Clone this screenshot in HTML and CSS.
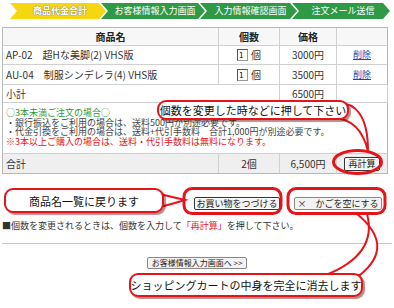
FILE: index.html
```html
<!DOCTYPE html>
<html lang="ja">
<head>
  <meta charset="UTF-8">
  <title>ショッピングカート</title>
  <link rel="stylesheet" href="styles.css">
</head>
<body>
<div class="page">

  <div class="steps">
    <div class="step step-now">商品代金合計</div>
    <div class="step">お客様情報入力画面</div>
    <div class="step">入力情報確認画面</div>
    <div class="step">注文メール送信</div>
  </div>

  <div class="cart">
    <div class="cell th">商品名</div>
    <div class="cell th">個数</div>
    <div class="cell th">価格</div>
    <div class="cell th"></div>

    <div class="cell name">AP-02　超Hな美脚(2) VHS版</div>
    <div class="cell mid"><input class="qty-box" type="text" value="1"> 個</div>
    <div class="cell mid">3000円</div>
    <div class="cell mid"><a class="del" href="#">削除</a></div>

    <div class="cell name">AU-04　制服シンデレラ(4) VHS版</div>
    <div class="cell mid"><input class="qty-box" type="text" value="1"> 個</div>
    <div class="cell mid">3500円</div>
    <div class="cell mid"><a class="del" href="#">削除</a></div>

    <div class="cell name span2">小計</div>
    <div class="cell mid">6500円</div>
    <div class="cell"></div>

    <div class="cell notes span4">
      <div class="green">○3本未満ご注文の場合○</div>
      <div>・銀行振込をご利用の場合は、送料500円が別途必要です。</div>
      <div>・代金引換をご利用の場合は、送料+代引手数料　合計1,000円が別途必要です。</div>
      <div class="red">※3本以上ご購入の場合は、送料・代引手数料は無料になります。</div>
    </div>

    <div class="cell name total">合計</div>
    <div class="cell mid total">2個</div>
    <div class="cell mid total">6,500円</div>
    <div class="cell mid total"><button class="btn btn-focus">再計算</button></div>
  </div>

  <div class="actions">
    <button class="btn btn-focus btn-shop">お買い物をつづける</button>
    <button class="btn btn-clear">×　かごを空にする</button>
  </div>

  <p class="hint">■個数を変更されるときは、個数を入力して<span class="red">「再計算」</span>を押して下さい。</p>

  <hr class="rule">

  <div class="next">
    <button class="btn btn-small">お客様情報入力画面へ &gt;&gt;</button>
  </div>

  <!-- annotation layer -->
  <svg class="marks" width="394" height="308" viewBox="0 0 394 308">
    <g fill="none" stroke="#e5141b" stroke-width="3">
      <ellipse cx="357.5" cy="162" rx="24" ry="11.5"/>
      <rect x="184" y="188.5" width="97" height="25" rx="8"/>
      <rect x="288" y="188.5" width="97" height="25" rx="8"/>
    </g>
    <g fill="#fff" stroke="#e5141b" stroke-width="2">
      <path d="M334 103 Q368 100 368 151 Q360 119 334 118 Z"/>
      <path d="M160 194 Q172 197 185 200 Q172 204 160 207 Z"/>
      <path d="M357 214 Q396 246 360 275 L326 275 Q378 254 367 214 Z"/>
    </g>
  </svg>

  <div class="callout callout-recalc">個数を変更した時などに押して下さい</div>
  <div class="callout callout-back">商品名一覧に戻ります</div>
  <div class="callout callout-clear">ショッピングカートの中身を完全に消去します</div>

</div>
</body>
</html>
```

FILE: styles.css
```css
body {
  margin: 0;
  background: #fff;
  color: #333;
  font-family: "Noto Sans CJK JP", "Noto Sans", sans-serif;
}
.page {
  position: relative;
  width: 394px;
  height: 308px;
  padding: 3px 2px 0;
  box-sizing: border-box;
  overflow: hidden;
}

/* step bar */
.steps {
  display: flex;
  height: 16px;
  margin: 0 0 8px 8px;
}
.step {
  height: 16px;
  line-height: 16px;
  font-size: 9px;
  color: #fff;
  background: #2f9a45;
  text-align: center;
  padding-left: 4px;
  clip-path: polygon(0 0, calc(100% - 7px) 0, 100% 50%, calc(100% - 7px) 100%, 0 100%, 7px 50%);
  margin-left: -5px;
}
.step:nth-child(1) { width: 92px; margin-left: 0; }
.step:nth-child(2) { width: 100px; }
.step:nth-child(3) { width: 93px; }
.step:nth-child(4) { width: 94px; }
.step-now {
  background: #f6d611;
  color: #fff;
  font-weight: bold;
  text-shadow: 0 0 1px #777, 0 0 1px #777;
}

/* cart table */
.cart {
  display: grid;
  grid-template-columns: 216px 61px 57px 51px;
  grid-template-rows: 18px 19px 20px 18px 51px 20px;
  width: 386px;
  box-sizing: border-box;
  border-top: 1px solid #b8b8b8;
  border-left: 1px solid #b8b8b8;
  font-size: 10px;
  line-height: 14px;
  color: #333;
}
.cell {
  display: flex;
  align-items: center;
  padding: 0 3px;
  border-right: 1px solid #d0d0d0;
  border-bottom: 1px solid #d0d0d0;
  white-space: nowrap;
}
.cell:nth-child(4n) { border-right-color: #b8b8b8; }
.th {
  justify-content: center;
  font-weight: bold;
  background: #f7f7f7;
  color: #222;
}
.mid { justify-content: center; gap: 3px; }
.span2 { grid-column: span 2; }
.span4 {
  grid-column: span 4;
  border-right-color: #b8b8b8;
}
.qty-box {
  width: 7px;
  height: 10px;
  padding: 0 1px;
  font-size: 8px;
  line-height: 10px;
  border: 1px solid #999;
  border-top-color: #555;
  border-left-color: #555;
  font-family: inherit;
}
.del {
  color: #2b3fb0;
  font-size: 9px;
}
.notes {
  display: block;
  font-size: 9px;
  line-height: 9.6px;
  color: #444;
  padding: 5px 3px 0;
}
.green { color: #2a9a3c; }
.red { color: #e8141c; }
.total {
  background: #efefef;
  border-bottom-color: #b8b8b8;
}

/* buttons */
.btn {
  font-family: inherit;
  font-size: 9px;
  line-height: 10px;
  color: #222;
  background: #f2f2f2;
  border: 1px solid #888;
  border-radius: 2px;
  padding: 1px 3px;
  cursor: pointer;
}
.btn-focus {
  border-color: #333;
  box-shadow: inset 0 0 0 1px #fff;
}
.actions {
  display: flex;
  justify-content: flex-end;
  gap: 14px;
  padding-right: 10px;
  margin-top: 23px;
}
.btn-shop,
.btn-clear {
  height: 13px;
  padding: 0;
}
.btn-shop { width: 86px; }
.btn-clear { width: 88px; }
.hint {
  margin: 10px 0 0;
  font-size: 9px;
  line-height: 12px;
  color: #333;
}
.rule {
  margin: 11px 0 0;
  border: 0;
  border-top: 1px solid #c8c8c8;
}
.next {
  display: flex;
  justify-content: center;
  margin-top: 13px;
}
.btn-small {
  font-size: 8px;
  height: 12px;
  padding: 0 4px;
}

/* annotations */
.marks {
  position: absolute;
  left: 0;
  top: 0;
  pointer-events: none;
}
.callout {
  position: absolute;
  box-sizing: border-box;
  background: #fff;
  border: 2px solid #e5141b;
  border-radius: 9px;
  box-shadow: 2px 2px 1px rgba(90, 0, 0, 0.45);
  font-size: 11px;
  color: #111;
  display: flex;
  align-items: center;
  justify-content: center;
  white-space: nowrap;
}
.callout-recalc {
  left: 157px;
  top: 100px;
  width: 192px;
  height: 20px;
}
.callout-back {
  left: 4px;
  top: 188px;
  width: 160px;
  height: 25px;
}
.callout-clear {
  left: 129px;
  top: 273px;
  width: 234px;
  height: 24px;
}
```
